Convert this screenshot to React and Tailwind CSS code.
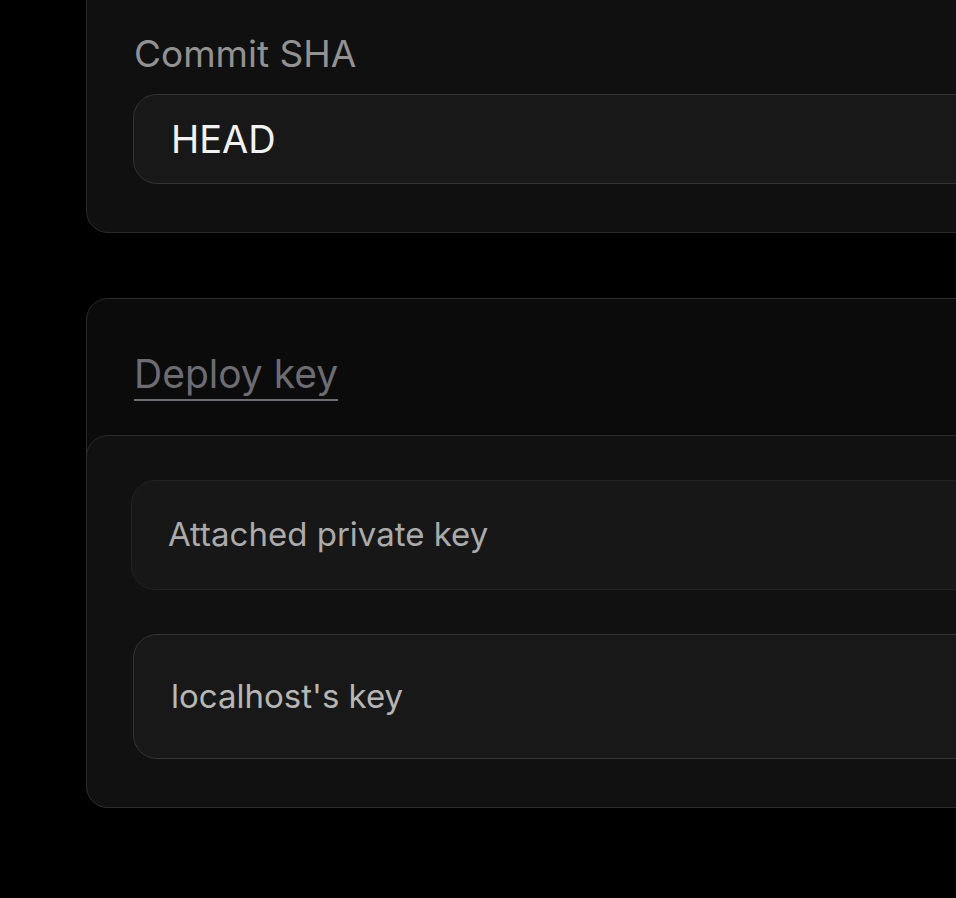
import React from 'react';

const font = { fontFamily: 'Inter, "Noto Sans", sans-serif' };

function Field({ label, value }) {
  return (
    <div>
      <div className="ml-[1px] mb-[17px] text-[37px] leading-[46px] text-[#929292]">{label}</div>
      <div className="flex h-[90px] items-center rounded-[24px] border border-[#333333] bg-[#181818] pl-[37px] text-[38px] text-[#f2f2f2]">
        {value}
      </div>
    </div>
  );
}

export default function App() {
  return (
    <div className="min-h-screen w-full overflow-hidden bg-black pl-[86px]" style={font}>
      <section className="-mt-[30px] w-[960px] rounded-[22px] border border-[#2b2b2b] bg-[#101010] px-[46px] pt-[60px] pb-[48px]">
        <Field label="Commit SHA" value="HEAD" />
      </section>

      <section className="mt-[65px] w-[960px] rounded-[22px] border border-[#2b2b2b] bg-[#0b0b0b]">
        <div className="px-[47px] pt-[52px] pb-[34px]">
          <span className="inline-block border-b-2 border-[#6c6c72] pb-[2px] text-[39px] leading-[46px] text-[#6c6c72]">
            Deploy key
          </span>
        </div>
        <div className="-mx-[1px] -mb-[1px] rounded-[22px] border border-[#2b2b2b] bg-[#111111] px-[44px] pt-[44px] pb-[48px]">
          <div className="flex h-[110px] items-center rounded-[24px] border border-[#222222] bg-[#171717] pl-[36px] text-[33px] text-[#ababab]">
            Attached private key
          </div>
          <div className="mt-[44px] ml-[2px] flex h-[125px] items-center rounded-[24px] border border-[#333333] bg-[#181818] pl-[37px] text-[33px] text-[#b6b6b6]">
            localhost's key
          </div>
        </div>
      </section>
    </div>
  );
}
